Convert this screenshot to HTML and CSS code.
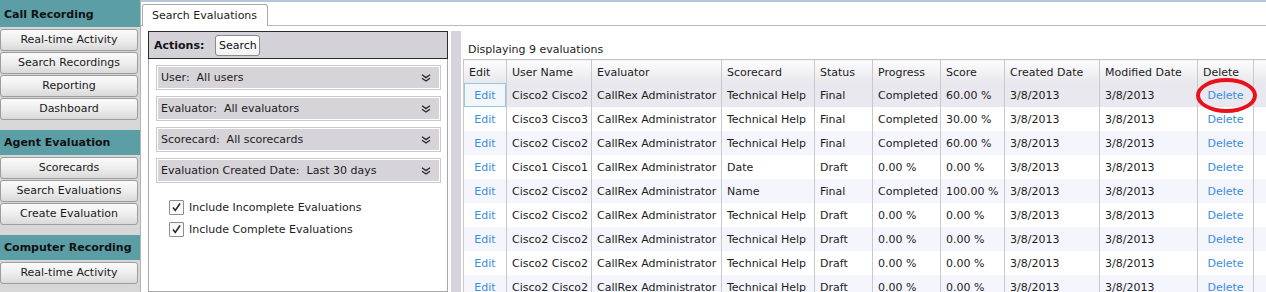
FILE: index.html
```html
<!DOCTYPE html>
<html lang="en">
<head>
  <meta charset="UTF-8" />
  <title>Search Evaluations</title>
  <link rel="stylesheet" href="styles.css">
</head>
<body>
  <div class="app">
    <aside class="sidebar">
      <div class="nav-section">
        <div class="nav-title first">Call Recording</div>
        <div class="nav-btn">Real-time Activity</div>
        <div class="nav-btn">Search Recordings</div>
        <div class="nav-btn">Reporting</div>
        <div class="nav-btn">Dashboard</div>
      </div>
      <div class="nav-section">
        <div class="nav-title">Agent Evaluation</div>
        <div class="nav-btn">Scorecards</div>
        <div class="nav-btn">Search Evaluations</div>
        <div class="nav-btn">Create Evaluation</div>
      </div>
      <div class="nav-section">
        <div class="nav-title">Computer Recording</div>
        <div class="nav-btn">Real-time Activity</div>
      </div>
    </aside>

    <div class="main">
      <div class="tabs">
        <div class="tab">Search Evaluations</div>
      </div>

      <div class="content">
        <div class="filters">
          <div class="actions">
            <b>Actions:</b>
            <button class="btn">Search</button>
          </div>
          <div class="filter-box">
            <div class="dropdown">
              <div class="dropdown-inner">
                <span>User:&nbsp; All users</span>
                <svg class="chev" width="10" height="8" viewBox="0 0 10 8"><path d="M1 0.8 L5 3.6 L9 0.8 M1 4.2 L5 7 L9 4.2" fill="none" stroke="#2b2b2b" stroke-width="1.4"/></svg>
              </div>
            </div>
            <div class="dropdown">
              <div class="dropdown-inner">
                <span>Evaluator:&nbsp; All evaluators</span>
                <svg class="chev" width="10" height="8" viewBox="0 0 10 8"><path d="M1 0.8 L5 3.6 L9 0.8 M1 4.2 L5 7 L9 4.2" fill="none" stroke="#2b2b2b" stroke-width="1.4"/></svg>
              </div>
            </div>
            <div class="dropdown">
              <div class="dropdown-inner">
                <span>Scorecard:&nbsp; All scorecards</span>
                <svg class="chev" width="10" height="8" viewBox="0 0 10 8"><path d="M1 0.8 L5 3.6 L9 0.8 M1 4.2 L5 7 L9 4.2" fill="none" stroke="#2b2b2b" stroke-width="1.4"/></svg>
              </div>
            </div>
            <div class="dropdown">
              <div class="dropdown-inner">
                <span>Evaluation Created Date:&nbsp; Last 30 days</span>
                <svg class="chev" width="10" height="8" viewBox="0 0 10 8"><path d="M1 0.8 L5 3.6 L9 0.8 M1 4.2 L5 7 L9 4.2" fill="none" stroke="#2b2b2b" stroke-width="1.4"/></svg>
              </div>
            </div>

            <div class="checks">
              <div class="check">
                <span class="box"><svg width="11" height="11" viewBox="0 0 11 11"><path d="M2 5.5 L4.3 8.5 L9 1.5" fill="none" stroke="#2a2a2a" stroke-width="1.6"/></svg></span>
                Include Incomplete Evaluations
              </div>
              <div class="check">
                <span class="box"><svg width="11" height="11" viewBox="0 0 11 11"><path d="M2 5.5 L4.3 8.5 L9 1.5" fill="none" stroke="#2a2a2a" stroke-width="1.6"/></svg></span>
                Include Complete Evaluations
              </div>
            </div>
          </div>
        </div>

        <div class="splitter"></div>

        <div class="results">
          <div class="caption">Displaying 9 evaluations</div>
          <table class="grid">
            <colgroup>
              <col style="width:43px"><col style="width:85px"><col style="width:130px"><col style="width:93px">
              <col style="width:58px"><col style="width:68px"><col style="width:64px"><col style="width:95px">
              <col style="width:98px"><col style="width:56px"><col>
            </colgroup>
            <thead>
              <tr>
                <th>Edit</th><th>User Name</th><th>Evaluator</th><th>Scorecard</th><th>Status</th>
                <th>Progress</th><th>Score</th><th>Created Date</th><th>Modified Date</th><th>Delete</th><th></th>
              </tr>
            </thead>
            <tbody>
              <tr class="selected">
                <td class="link focus">Edit</td><td>Cisco2 Cisco2</td><td>CallRex Administrator</td><td>Technical Help</td><td>Final</td>
                <td>Completed</td><td>60.00 %</td><td>3/8/2013</td><td>3/8/2013</td>
                <td class="link marked">Delete<span class="circle"></span></td><td></td>
              </tr>
              <tr>
                <td class="link">Edit</td><td>Cisco3 Cisco3</td><td>CallRex Administrator</td><td>Technical Help</td><td>Final</td>
                <td>Completed</td><td>30.00 %</td><td>3/8/2013</td><td>3/8/2013</td><td class="link">Delete</td><td></td>
              </tr>
              <tr class="alt">
                <td class="link">Edit</td><td>Cisco2 Cisco2</td><td>CallRex Administrator</td><td>Technical Help</td><td>Final</td>
                <td>Completed</td><td>60.00 %</td><td>3/8/2013</td><td>3/8/2013</td><td class="link">Delete</td><td></td>
              </tr>
              <tr>
                <td class="link">Edit</td><td>Cisco1 Cisco1</td><td>CallRex Administrator</td><td>Date</td><td>Draft</td>
                <td>0.00 %</td><td>0.00 %</td><td>3/8/2013</td><td>3/8/2013</td><td class="link">Delete</td><td></td>
              </tr>
              <tr class="alt">
                <td class="link">Edit</td><td>Cisco2 Cisco2</td><td>CallRex Administrator</td><td>Name</td><td>Final</td>
                <td>Completed</td><td>100.00 %</td><td>3/8/2013</td><td>3/8/2013</td><td class="link">Delete</td><td></td>
              </tr>
              <tr>
                <td class="link">Edit</td><td>Cisco2 Cisco2</td><td>CallRex Administrator</td><td>Technical Help</td><td>Draft</td>
                <td>0.00 %</td><td>0.00 %</td><td>3/8/2013</td><td>3/8/2013</td><td class="link">Delete</td><td></td>
              </tr>
              <tr class="alt">
                <td class="link">Edit</td><td>Cisco2 Cisco2</td><td>CallRex Administrator</td><td>Technical Help</td><td>Draft</td>
                <td>0.00 %</td><td>0.00 %</td><td>3/8/2013</td><td>3/8/2013</td><td class="link">Delete</td><td></td>
              </tr>
              <tr>
                <td class="link">Edit</td><td>Cisco2 Cisco2</td><td>CallRex Administrator</td><td>Technical Help</td><td>Draft</td>
                <td>0.00 %</td><td>0.00 %</td><td>3/8/2013</td><td>3/8/2013</td><td class="link">Delete</td><td></td>
              </tr>
              <tr class="alt">
                <td class="link">Edit</td><td>Cisco2 Cisco2</td><td>CallRex Administrator</td><td>Technical Help</td><td>Draft</td>
                <td>0.00 %</td><td>0.00 %</td><td>3/8/2013</td><td>3/8/2013</td><td class="link">Delete</td><td></td>
              </tr>
            </tbody>
          </table>
        </div>
      </div>
    </div>
  </div>
</body>
</html>
```

FILE: styles.css
```css
body {
  margin: 0;
  font-family: "DejaVu Sans", Verdana, sans-serif;
  font-size: 11px;
  color: #1c1c1c;
  background: #fff;
}

.app {
  display: flex;
  width: 1266px;
  height: 292px;
  overflow: hidden;
}

/* left navigation */
.sidebar {
  width: 140px;
  flex: none;
  background: #d7d7d7;
}

.nav-section {
  margin-bottom: 10px;
}

.nav-title {
  height: 25px;
  line-height: 26px;
  padding-left: 4px;
  margin-bottom: 2px;
  background: #5c9ea5;
  font-weight: bold;
  color: #111;
}

.nav-title.first {
  height: 27px;
  line-height: 29px;
}

.nav-btn {
  width: 136px;
  height: 20px;
  line-height: 20px;
  margin-bottom: 1px;
  text-align: center;
  border: 1px solid #9c9c9c;
  border-radius: 3px;
  background: linear-gradient(#fbfbfb, #ececec 55%, #d9d9d9);
  color: #1a1a1a;
}

/* main area */
.main {
  flex: 1;
  display: flex;
  flex-direction: column;
  border-top: 2px solid #b4c8dc;
  border-left: 1px solid #aeb4b8;
  min-width: 0;
}

.tabs {
  height: 23px;
  border-bottom: 1px solid #b8b8b8;
  display: flex;
  align-items: flex-end;
}

.tab {
  height: 21px;
  line-height: 22px;
  margin-left: 1px;
  margin-bottom: -1px;
  padding: 0 10px 0 9px;
  border: 1px solid #a9a9a9;
  border-bottom: none;
  border-radius: 3px 3px 0 0;
  background: #fff;
  white-space: nowrap;
}

.content {
  flex: 1;
  display: flex;
  padding-top: 5px;
  min-height: 0;
}

/* filter panel */
.filters {
  width: 300px;
  margin-left: 7px;
  flex: none;
  display: flex;
  flex-direction: column;
}

.actions {
  height: 26px;
  border: 1px solid #2b2b2b;
  background: #d4d1d8;
  display: flex;
  align-items: center;
  padding-left: 5px;
}

.actions b {
  margin-right: 11px;
  color: #111;
}

.btn {
  font: inherit;
  color: #111;
  height: 21px;
  width: 45px;
  padding: 0;
  border: 1px solid #8a8a8a;
  border-radius: 3px;
  background: linear-gradient(#ffffff, #f2f2f2);
}

.filter-box {
  flex: 1;
  border: 1px solid #a8a8a8;
  border-top: none;
  padding-top: 6px;
}

.dropdown {
  margin: 0 6px 6px 7px;
  border: 1px solid #cacaca;
  padding: 1px;
}

.dropdown-inner {
  height: 21px;
  background: #d6d3d9;
  display: flex;
  align-items: center;
  justify-content: space-between;
  padding: 0 8px 0 3px;
}

.checks {
  padding: 7px 0 0 20px;
}

.check {
  display: flex;
  align-items: center;
  height: 22px;
}

.check .box {
  width: 13px;
  height: 13px;
  border: 1px solid #8e8e8e;
  border-radius: 1px;
  background: linear-gradient(#f4f4f4, #ffffff);
  margin-right: 5px;
  display: flex;
  align-items: center;
  justify-content: center;
}

.splitter {
  width: 10px;
  flex: none;
  margin-left: 3px;
  background: #d6d3dd;
}

/* results grid */
.results {
  flex: 1;
  padding-left: 2px;
  min-width: 0;
}

.caption {
  height: 28px;
  box-sizing: border-box;
  padding: 11px 0 0 5px;
  line-height: 16px;
}

.grid {
  width: 100%;
  table-layout: fixed;
  border-collapse: collapse;
}

.grid th {
  height: 22px;
  font-weight: normal;
  text-align: left;
  padding: 1px 5px 0;
  border-top: 1px solid #c2c2ca;
  border-left: 1px solid #c8c8d0;
  background: linear-gradient(#fdfdfe, #e7e7ec);
  white-space: nowrap;
}

.grid td {
  height: 23px;
  padding: 1px 5px 0;
  border-left: 1px solid #c8c8d0;
  white-space: nowrap;
}

.grid tr.alt td {
  background: #f5f6fd;
}

.grid tr.selected td {
  background: #e8e8ee;
}

.grid td.link {
  text-align: center;
  color: #3a8ce6;
}

.grid tr.selected td.focus {
  background: #f3f6f9;
  box-shadow: inset 0 0 0 1px #95cbdc;
}

.grid td.marked {
  position: relative;
}

.circle {
  position: absolute;
  left: -2px;
  top: -5px;
  width: 53px;
  height: 27px;
  border: 4px solid #e8111c;
  border-radius: 50%;
}
```
